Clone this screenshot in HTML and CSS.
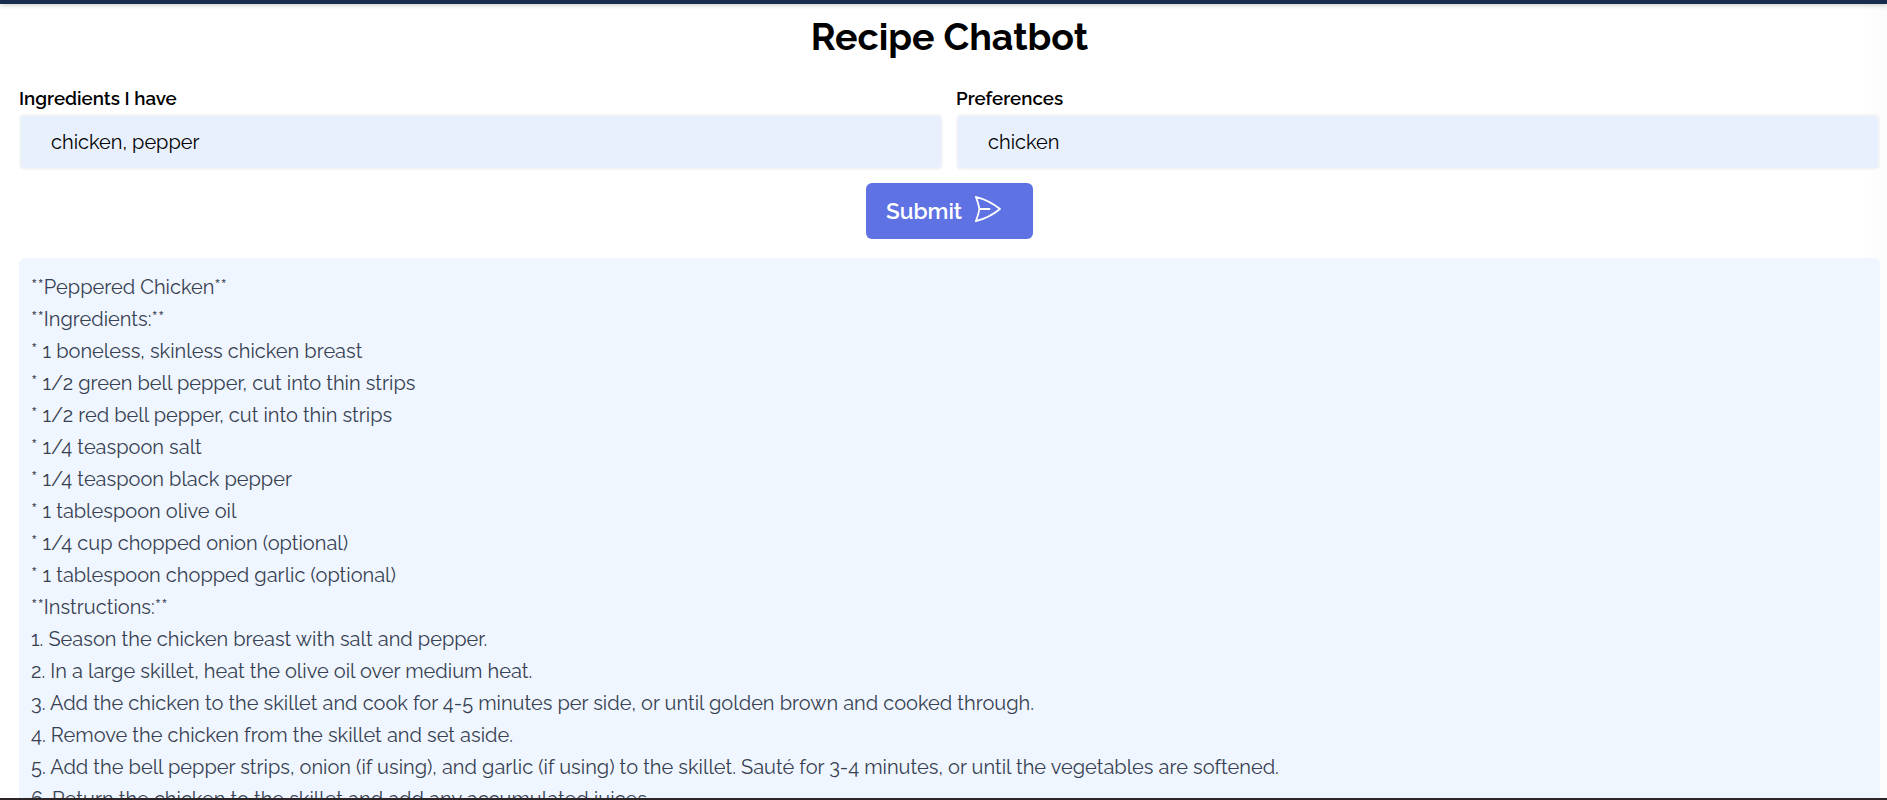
FILE: index.html
```html
<!DOCTYPE html>
<html lang="en">
  <head>
    <meta charset="UTF-8" />
    <meta name="viewport" content="width=device-width, initial-scale=1.0" />
    <title>Recipe Chatbot</title>
    <link rel="stylesheet" href="styles.css">
  </head>
  <body>
    <div class="navbar"></div>
    <main class="container">
      <h1 class="title">Recipe Chatbot</h1>
      <form class="recipe-form">
        <div class="fields">
          <div class="field">
            <label for="ingredients">Ingredients I have</label>
            <input type="text" id="ingredients" value="chicken, pepper">
          </div>
          <div class="field">
            <label for="preferences">Preferences</label>
            <input type="text" id="preferences" value="chicken">
          </div>
        </div>
        <button class="submit" type="button">
          <span>Submit</span>
          <svg class="send" viewBox="0 0 28 28" width="28" height="28">
            <path d="M1.8 1.8 C10.5 4 19 8.3 26 14 C19 19.7 10.5 24 1.8 26.2 C3.2 22.5 4.8 18.5 5.3 14 C4.8 9.5 3.2 5.5 1.8 1.8 Z M5.3 14 H15.5" />
          </svg>
        </button>
      </form>
      <div class="answer">
        <p>**Peppered Chicken**</p>
        <p>**Ingredients:**</p>
        <p>* 1 boneless, skinless chicken breast</p>
        <p>* 1/2 green bell pepper, cut into thin strips</p>
        <p>* 1/2 red bell pepper, cut into thin strips</p>
        <p>* 1/4 teaspoon salt</p>
        <p>* 1/4 teaspoon black pepper</p>
        <p>* 1 tablespoon olive oil</p>
        <p>* 1/4 cup chopped onion (optional)</p>
        <p>* 1 tablespoon chopped garlic (optional)</p>
        <p>**Instructions:**</p>
        <p>1. Season the chicken breast with salt and pepper.</p>
        <p>2. In a large skillet, heat the olive oil over medium heat.</p>
        <p>3. Add the chicken to the skillet and cook for 4-5 minutes per side, or until golden brown and cooked through.</p>
        <p>4. Remove the chicken from the skillet and set aside.</p>
        <p>5. Add the bell pepper strips, onion (if using), and garlic (if using) to the skillet. Sauté for 3-4 minutes, or until the vegetables are softened.</p>
        <p>6. Return the chicken to the skillet and add any accumulated juices.</p>
      </div>
    </main>
  </body>
</html>
```
FILE: styles.css
```css
* {
  box-sizing: border-box;
}

body {
  margin: 0;
  height: 800px;
  display: flex;
  flex-direction: column;
  overflow: hidden;
  background: linear-gradient(to right, #ffffff 1860px, #fbfbfb 1887px);
  border-bottom: 2px solid #2b2527;
  font-family: Raleway, Lato, sans-serif;
  color: #000;
}

.navbar {
  flex: none;
  height: 4px;
  background-color: #172b4d;
  box-shadow: 0 1px 5px rgba(0, 0, 0, 0.25);
}

.container {
  flex: 1;
  min-height: 0;
  padding: 0 7px 0 19px;
  overflow: hidden;
}

.title {
  margin: 10px 0 0;
  height: 71px;
  line-height: 46px;
  font-size: 37.5px;
  font-weight: 700;
  text-align: center;
}

.fields {
  display: flex;
  gap: 13px;
}

.field {
  flex: 1;
}

.field label {
  display: block;
  height: 29px;
  line-height: 27px;
  font-size: 18.75px;
  font-weight: 600;
}

.field input {
  display: block;
  width: 100%;
  height: 56px;
  padding: 0 30px;
  border: 2px solid #f3f4f6;
  border-radius: 5px;
  background-color: #e8f0fe;
  font-family: inherit;
  font-size: 20px;
  color: #000;
}

.submit {
  display: flex;
  align-items: center;
  width: 167px;
  height: 56px;
  margin: 13px auto 19px;
  padding: 0 20px;
  border: 0;
  border-radius: 6px;
  background-color: #5e72e4;
  color: #fff;
  font-family: inherit;
  font-size: 22.5px;
  font-weight: 600;
}

.submit span {
  margin-top: -1px;
}

.send {
  margin: -4px 0 0 12px;
  fill: none;
  stroke: #fff;
  stroke-width: 1.8;
  stroke-linejoin: round;
  stroke-linecap: round;
}

.answer {
  height: 620px;
  padding: 13px 12px 12px;
  border-radius: 6px;
  background-color: #eff6ff;
}

.answer p {
  margin: 0;
  font-size: 20px;
  line-height: 32px;
  color: #374151;
  white-space: nowrap;
}
```
